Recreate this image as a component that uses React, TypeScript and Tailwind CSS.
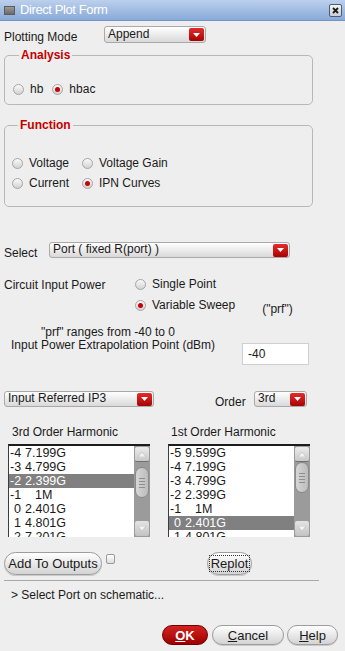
import React from 'react';

type Row = { idx: string; val: string; sel?: boolean; pad?: boolean };

const leftRows: Row[] = [
  { idx: '-4', val: '7.199G' },
  { idx: '-3', val: '4.799G' },
  { idx: '-2', val: '2.399G', sel: true },
  { idx: '-1', val: '1M', pad: true },
  { idx: '0', val: '2.401G' },
  { idx: '1', val: '4.801G' },
  { idx: '2', val: '7.201G' },
];

const rightRows: Row[] = [
  { idx: '-5', val: '9.599G' },
  { idx: '-4', val: '7.199G' },
  { idx: '-3', val: '4.799G' },
  { idx: '-2', val: '2.399G' },
  { idx: '-1', val: '1M', pad: true },
  { idx: '0', val: '2.401G', sel: true },
  { idx: '1', val: '4.801G' },
];

const Radio = ({ checked }: { checked?: boolean }) => (
  <span className="w-[11px] h-[11px] rounded-full border border-[#a5a5a5] bg-linear-to-b from-[#fafafa] to-[#d2d2d2] flex items-center justify-center shrink-0">
    {checked && <span className="w-[5px] h-[5px] rounded-full bg-[#cc0000]" />}
  </span>
);

const RadioItem = ({ label, checked }: { label: string; checked?: boolean }) => (
  <div className="flex items-center h-[14px] leading-[14px]">
    <Radio checked={checked} />
    <span className="ml-[6px]">{label}</span>
  </div>
);

const Combo = ({ value, className }: { value: string; className: string }) => (
  <div className={`flex items-center justify-between rounded-[3px] border border-[#a9a9a9] bg-linear-to-b from-white to-[#d9d9d9] pl-[3px] pr-[1px] ${className}`}>
    <span className="leading-[14px] -mt-[2px]">{value}</span>
    <span className="w-[15px] h-[13px] rounded-[2px] bg-linear-to-b from-[#e42b2b] to-[#a80000] flex items-center justify-center">
      <svg width="7" height="4" viewBox="0 0 7 4">
        <path d="M0 0h7L3.5 4z" fill="#ffffff" />
      </svg>
    </span>
  </div>
);

const ScrollBar = ({ thumbTop }: { thumbTop: number }) => (
  <div className="w-[16px] h-full bg-[#9b9b9b] flex flex-col relative shrink-0">
    <div className="h-[15px] mx-[1px] mt-[1px] rounded-[2px] bg-linear-to-b from-[#ececec] to-[#c9c9c9] flex items-center justify-center border-b border-[#707070]">
      <svg width="8" height="5" viewBox="0 0 8 5">
        <path d="M0 5L4 0l4 5z" fill="#f4f4f4" stroke="#b8b8b8" strokeWidth="0.6" />
      </svg>
    </div>
    {/* thumb */}
    <div
      className="absolute left-[1px] w-[14px] h-[31px] rounded-[7px] bg-linear-to-r from-[#d6d6d6] to-[#bcbcbc] border border-[#8a8a8a] flex flex-col items-center justify-center gap-[2px]"
      style={{ top: thumbTop }}
    >
      <span className="w-[6px] h-px bg-[#8e8e8e]" />
      <span className="w-[6px] h-px bg-[#8e8e8e]" />
      <span className="w-[6px] h-px bg-[#8e8e8e]" />
      <span className="w-[6px] h-px bg-[#8e8e8e]" />
    </div>
    <div className="mt-auto mb-[1px] h-[15px] mx-[1px] rounded-[2px] bg-linear-to-b from-[#e4e4e4] to-[#c3c3c3] flex items-center justify-center">
      <svg width="8" height="5" viewBox="0 0 8 5">
        <path d="M0 0h8L4 5z" fill="#f4f4f4" stroke="#b8b8b8" strokeWidth="0.6" />
      </svg>
    </div>
  </div>
);

const ListBox = ({ rows, thumbTop }: { rows: Row[]; thumbTop: number }) => (
  <div className="w-[142px] h-[93px] flex bg-white border-t-2 border-l border-t-[#1c1c1c] border-l-[#3c3c3c] overflow-hidden">
    <div className="flex-1 overflow-hidden">
      {rows.map((r) => (
        <div
          key={r.idx}
          className={`h-[14px] flex pl-[1px] leading-[14px] text-[12.5px] ${r.sel ? 'bg-[#808080] text-white' : ''}`}
        >
          <span className="w-[11px] text-right">{r.idx}</span>
          <span className={r.pad ? 'ml-[14px]' : 'ml-[4px]'}>{r.val}</span>
        </div>
      ))}
    </div>
    <ScrollBar thumbTop={thumbTop} />
  </div>
);

const PillButton = ({ children, className }: { children: React.ReactNode; className: string }) => (
  <div className={`flex items-center justify-center rounded-full border border-[#9d9d9d] bg-linear-to-b from-white to-[#d3d3d3] shadow-[0_1px_0_rgba(0,0,0,0.15)] ${className}`}>
    {children}
  </div>
);

export default function App() {
  return (
    <div className="w-[345px] h-[651px] bg-[#eeeeee] overflow-hidden text-[12px] text-[#1a1a1a] font-['Liberation_Sans',Arial,sans-serif] flex flex-col">
      {/* Title bar */}
      <div className="h-[21px] shrink-0 flex items-center bg-linear-to-b from-[#bcd0ec] to-[#88aad9] border-b border-[#7393c4]">
        <span className="ml-[4px] w-[11px] h-[9px] bg-linear-to-b from-[#9a9a9a] to-[#6c6c6c] border border-[#5c5c5c]" />
        <span className="ml-[5px] text-white text-[13px] tracking-[-0.4px] leading-[16px]">Direct Plot Form</span>
        <span className="ml-auto mr-[3px] w-[13px] h-[13px] rounded-[2px] border border-[#4e5b70] bg-linear-to-b from-[#f4f4f4] to-[#c9d0da] flex items-center justify-center">
          <svg width="7" height="7" viewBox="0 0 7 7">
            <path d="M1 1l5 5M6 1L1 6" stroke="#1b1b1b" strokeWidth="1.8" />
          </svg>
        </span>
      </div>

      {/* Plotting Mode */}
      <div className="mt-[5px] flex h-[17px] shrink-0">
        <span className="w-[104px] pl-[4px] pt-[4px] leading-[14px]">Plotting Mode</span>
        <Combo value="Append" className="w-[102px] h-[17px]" />
      </div>

      {/* Analysis */}
      <fieldset className="mt-[5px] ml-[4px] w-[309px] shrink-0 border border-[#b8b8b8] rounded-[5px] pl-[8px] pb-[8px]">
        <legend className="ml-[6px] px-[2px] font-bold text-[#c40000] leading-[14px]">Analysis</legend>
        <div className="mt-[20px] flex items-center gap-[9px]">
          <RadioItem label="hb" />
          <RadioItem label="hbac" checked />
        </div>
      </fieldset>

      {/* Function */}
      <fieldset className="mt-[13px] ml-[4px] w-[309px] shrink-0 border border-[#b8b8b8] rounded-[5px] pl-[7px] pb-[16px]">
        <legend className="ml-[6px] px-[2px] font-bold text-[#c40000] leading-[14px]">Function</legend>
        <div className="mt-[24px] grid grid-cols-[70px_auto] gap-y-[6px]">
          <RadioItem label="Voltage" />
          <RadioItem label="Voltage Gain" />
          <RadioItem label="Current" />
          <RadioItem label="IPN Curves" checked />
        </div>
      </fieldset>

      {/* Select */}
      <div className="mt-[35px] flex h-[16px] shrink-0">
        <span className="w-[49px] pl-[4px] pt-[4px] leading-[14px]">Select</span>
        <Combo value="Port ( fixed R(port) )" className="w-[241px] h-[16px]" />
      </div>

      {/* Circuit Input Power */}
      <div className="mt-[19px] flex shrink-0">
        <span className="w-[135px] pl-[4px] pt-[1px] leading-[14px]">Circuit Input Power</span>
        <div className="flex flex-col">
          <RadioItem label="Single Point" />
          <div className="mt-[7px] flex items-start">
            <RadioItem label="Variable Sweep" checked />
            <span className="ml-[27px] mt-[4px] leading-[14px]">("prf")</span>
          </div>
        </div>
      </div>

      {/* Extrapolation */}
      <div className="mt-[10px] flex items-start shrink-0">
        <div className="w-[242px] leading-[13px]">
          <div className="pl-[41px]">"prf" ranges from -40 to 0</div>
          <div className="pl-[11px]">Input Power Extrapolation Point (dBm)</div>
        </div>
        <div className="mt-[17px] w-[67px] h-[22px] bg-white border border-[#cfcfcf] pl-[5px] leading-[20px]">-40</div>
      </div>

      {/* IP3 / Order */}
      <div className="mt-[26px] flex items-start shrink-0">
        <Combo value="Input Referred IP3" className="ml-[4px] w-[150px] h-[16px]" />
        <span className="ml-[61px] w-[39px] pt-[4px] leading-[14px]">Order</span>
        <Combo value="3rd" className="w-[53px] h-[16px]" />
      </div>

      {/* Harmonic labels */}
      <div className="mt-[16px] flex leading-[14px] shrink-0">
        <span className="w-[171px] pl-[12px]">3rd Order Harmonic</span>
        <span>1st Order Harmonic</span>
      </div>

      {/* Lists */}
      <div className="mt-[5px] flex shrink-0">
        <div className="ml-[8px]">
          <ListBox rows={leftRows} thumbTop={21} />
        </div>
        <div className="ml-[18px]">
          <ListBox rows={rightRows} thumbTop={16} />
        </div>
      </div>

      {/* Add / Replot */}
      <div className="mt-[15px] flex items-start shrink-0">
        <PillButton className="ml-[4px] w-[98px] h-[23px]">
          <span className="text-[13px]">Add To Outputs</span>
        </PillButton>
        <span className="ml-[4px] mt-[2px] w-[9px] h-[10px] rounded-[2px] border border-[#9a9a9a] bg-linear-to-b from-white to-[#dcdcdc]" />
        <PillButton className="ml-[92px] w-[45px] h-[23px]">
          <span className="text-[13px] px-[1px] leading-[15px] border border-dotted border-[#333333]">Replot</span>
        </PillButton>
      </div>

      <div className="mt-[5px] ml-[4px] w-[315px] h-px bg-[#a8a8a8] shrink-0" />

      <div className="mt-[7px] pl-[11px] leading-[14px] shrink-0">&gt; Select Port on schematic...</div>

      {/* OK / Cancel / Help */}
      <div className="mt-[23px] flex shrink-0">
        <div className="ml-[162px] w-[46px] h-[20px] rounded-full border border-[#6e0000] bg-linear-to-b from-[#d42020] to-[#9e0000] flex items-center justify-center">
          <span className="text-white font-bold text-[13px] leading-[15px]"><span className="underline">O</span>K</span>
        </div>
        <PillButton className="ml-[4px] w-[72px] h-[20px]">
          <span className="text-[13px] leading-[15px]"><span className="underline">C</span>ancel</span>
        </PillButton>
        <PillButton className="ml-[3px] w-[51px] h-[20px]">
          <span className="text-[13px] leading-[15px]"><span className="underline">H</span>elp</span>
        </PillButton>
      </div>
    </div>
  );
}
